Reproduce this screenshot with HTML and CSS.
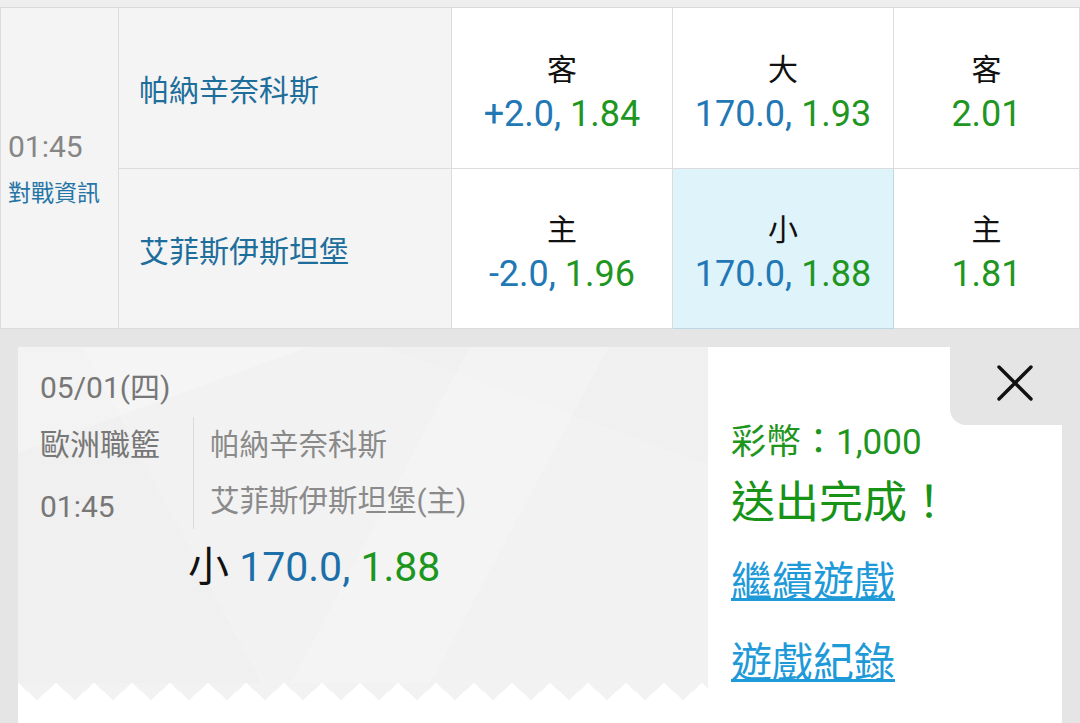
FILE: index.html
```html
<!DOCTYPE html>
<html lang="zh-Hant">
<head>
<meta charset="utf-8">
<title>投注</title>
<link rel="stylesheet" href="styles.css">
</head>
<body>
<div class="top"></div>
<div class="board">
  <div class="c time">
    <div class="t">01:45</div>
    <div class="info">對戰資訊</div>
  </div>
  <div class="c team">帕納辛奈科斯</div>
  <div class="c odd"><span class="lbl">客</span><span class="val"><span class="h">+2.0,</span> <span class="o">1.84</span></span></div>
  <div class="c odd"><span class="lbl">大</span><span class="val"><span class="h">170.0,</span> <span class="o">1.93</span></span></div>
  <div class="c odd"><span class="lbl">客</span><span class="val"><span class="o">2.01</span></span></div>
  <div class="c team">艾菲斯伊斯坦堡</div>
  <div class="c odd"><span class="lbl">主</span><span class="val"><span class="h">-2.0,</span> <span class="o">1.96</span></span></div>
  <div class="c odd sel"><span class="lbl">小</span><span class="val"><span class="h">170.0,</span> <span class="o">1.88</span></span></div>
  <div class="c odd"><span class="lbl">主</span><span class="val"><span class="o">1.81</span></span></div>
</div>
<div class="wrap">
  <div class="card">
    <div class="slip">
      <div class="slip-body">
        <div class="date">05/01(四)</div>
        <div class="match">
          <div class="meta">
            <div class="lg">歐洲職籃</div>
            <div class="tm">01:45</div>
          </div>
          <div class="teams">
            <div>帕納辛奈科斯</div>
            <div>艾菲斯伊斯坦堡(主)</div>
          </div>
        </div>
        <div class="pick"><span class="k">小</span> <span class="h">170.0,</span> <span class="o">1.88</span></div>
      </div>
      <div class="zig"></div>
    </div>
    <div class="result">
      <div class="close">
        <svg width="36" height="36" viewBox="0 0 36 36"><path d="M2 2 L34 34 M34 2 L2 34" stroke="#111" stroke-width="3.4" stroke-linecap="round" fill="none"/></svg>
      </div>
      <div class="coin">彩幣：1,000</div>
      <div class="done">送出完成！</div>
      <a class="link first" href="#">繼續遊戲</a>
      <a class="link" href="#">遊戲紀錄</a>
    </div>
  </div>
</div>
</body>
</html>
```

FILE: styles.css
```css
html, body {
  margin: 0;
  padding: 0;
}
body {
  background: #e5e5e5;
  font-family: Roboto, "Noto Sans CJK TC", sans-serif;
  height: 723px;
  overflow: hidden;
}
.top {
  height: 7px;
  background: #eeeeee;
  border-bottom: 1px solid #d9d9d9;
}
.board {
  display: grid;
  grid-template-columns: 119px 333px 221px 221px 1fr;
  grid-template-rows: 161px 160px;
  background: #fff;
}
.c {
  box-sizing: border-box;
  border-right: 1px solid #dcdcdc;
  border-bottom: 1px solid #dcdcdc;
}
.time {
  grid-row: span 2;
  background: #f4f4f4;
  border-left: 1px solid #dcdcdc;
  display: flex;
  flex-direction: column;
  justify-content: center;
  padding-left: 7px;
}
.time .t {
  font-size: 30px;
  line-height: 52px;
  color: #868686;
}
.time .info {
  font-size: 23px;
  line-height: 42px;
  color: #2576a6;
}
.team {
  background: #f4f4f4;
  display: flex;
  align-items: center;
  padding-left: 20px;
  font-size: 30px;
  color: #1e6e9b;
}
.odd {
  display: flex;
  flex-direction: column;
  align-items: center;
  justify-content: center;
  padding-top: 7px;
}
.lbl {
  font-size: 30px;
  line-height: 44px;
  color: #111;
}
.val {
  font-size: 36px;
  line-height: 44px;
}
.h {
  color: #2178b5;
}
.o {
  color: #1f961f;
}
.sel {
  background: #dff3fb;
  border-right-color: #bcd8e5;
  border-bottom-color: #bcd8e5;
}
.wrap {
  padding: 18px 18px 0;
}
.card {
  display: flex;
  background: #fff;
  height: 376px;
}
.slip {
  width: 690px;
  display: flex;
  flex-direction: column;
}
.slip-body {
  box-sizing: border-box;
  height: 336px;
  padding: 16px 0 0 22px;
  background:
    linear-gradient(118deg, transparent 0 52%, rgba(255,255,255,0.18) 52% 68%, transparent 68%),
    linear-gradient(62deg, rgba(0,0,0,0.008) 0 28%, transparent 28%),
    linear-gradient(160deg, rgba(255,255,255,0.25) 0 18%, transparent 18%),
    linear-gradient(20deg, transparent 0 80%, rgba(0,0,0,0.008) 80%),
    #f2f2f2;
}
.date {
  font-size: 30px;
  line-height: 50px;
  color: #777;
}
.match {
  display: flex;
  margin-top: 4px;
}
.meta {
  width: 153px;
  color: #777;
  font-size: 30px;
}
.lg {
  line-height: 56px;
}
.tm {
  line-height: 56px;
  margin-top: 6px;
}
.teams {
  border-left: 1px solid #dadada;
  padding-left: 16px;
  font-size: 29.5px;
  line-height: 56px;
  color: #8a8a8a;
  height: 112px;
  align-self: flex-start;
}
.pick {
  padding-left: 148px;
  margin-top: 4px;
  font-size: 41px;
  line-height: 56px;
}
.pick .k {
  color: #111;
}
.pick .h {
  color: #1c6fa9;
}
.pick .o {
  color: #1d961d;
}
.zig {
  height: 17px;
  background: conic-gradient(from -48deg at 50% 100%, #f2f2f2 96deg, transparent 0) 0 0 / 38px 17px repeat-x;
}
.result {
  flex: 1;
  display: flex;
  flex-direction: column;
  padding-left: 23px;
}
.close {
  align-self: flex-end;
  box-sizing: border-box;
  width: 112px;
  height: 78px;
  background: #e5e5e5;
  border-bottom-left-radius: 16px;
  padding: 18px 0 0 47px;
}
.close svg {
  display: block;
}
.coin {
  font-size: 35px;
  line-height: 36px;
  color: #1e961e;
}
.done {
  margin-top: 14px;
  font-size: 44px;
  line-height: 56px;
  color: #179317;
}
.link {
  align-self: flex-start;
  margin-top: 25px;
  font-size: 41px;
  line-height: 56px;
  color: #1f9ad8;
  text-decoration: underline;
  text-decoration-thickness: 3px;
}
.link.first {
  margin-top: 23px;
}
```
